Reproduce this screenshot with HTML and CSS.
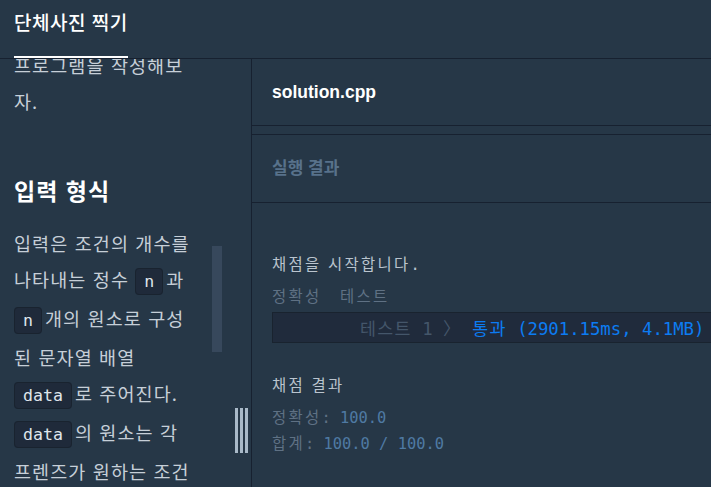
FILE: index.html
```html
<!DOCTYPE html>
<html lang="ko">
<head>
<meta charset="utf-8">
<title>단체사진 찍기</title>
<link rel="stylesheet" href="styles.css">
</head>
<body>
<div class="app">
  <header class="topbar">
    <div class="tab">단체사진 찍기</div>
  </header>
  <main class="panes">
    <section class="desc">
      <div class="desc-body">
        <p>프로그램을 작성해보<br>자.</p>
        <h3>입력 형식</h3>
        <p>입력은 조건의 개수를<br>나타내는 정수 <code>n</code>과<br><code>n</code>개의 원소로 구성<br>된 문자열 배열<br><code>data</code>로 주어진다.<br><code>data</code>의 원소는 각<br>프렌즈가 원하는 조건<br>이 <code>N~F=0</code>과 같은</p>
      </div>
      <div class="scroll-thumb"></div>
      <div class="grip"><span></span><span></span><span></span></div>
    </section>
    <section class="work">
      <div class="file-head">solution.cpp</div>
      <div class="result-head">실행 결과</div>
      <div class="console">
        <div class="line msg"><span class="ko">채점을 시작합니다</span>.</div>
        <div class="line dim gap-s"><span class="ko">정확성</span>  <span class="ko">테스트</span></div>
        <div class="case"><span class="case-name"><span class="ko">테스트</span> 1 <span class="ko">〉</span></span> <span class="pass"><span class="ko">통과</span> (2901.15ms, 4.1MB)</span></div>
        <div class="line msg gap-l"><span class="ko">채점 결과</span></div>
        <div class="line gap-s"><span class="ko dim">정확성</span><span class="dim">: </span><span class="num">100.0</span></div>
        <div class="line"><span class="ko dim">합계</span><span class="dim">: </span><span class="num">100.0 / 100.0</span></div>
      </div>
    </section>
  </main>
</div>
</body>
</html>
```
FILE: styles.css
```css
html, body {
  margin: 0;
  padding: 0;
}
body {
  width: 711px;
  height: 487px;
  overflow: hidden;
  background: #263747;
  font-family: "Noto Sans CJK KR", "Noto Sans", sans-serif;
  color: #c6cfd8;
}
.app {
  display: flex;
  flex-direction: column;
  height: 487px;
}
.topbar {
  height: 58px;
  border-bottom: 1px solid #172130;
  display: flex;
  flex-shrink: 0;
}
.tab {
  margin-left: 14px;
  font-size: 19px;
  letter-spacing: 0.5px;
  font-weight: 500;
  color: #ffffff;
  line-height: 44px;
  height: 44px;
  padding-bottom: 12px;
  border-bottom: 2px solid #ffffff;
  white-space: nowrap;
}
.panes {
  flex: 1;
  display: flex;
  min-height: 0;
}
.desc {
  width: 251px;
  flex-shrink: 0;
  border-right: 1px solid #172130;
  position: relative;
  overflow: hidden;
}
.desc-body {
  margin-top: -12px;
  padding-left: 14px;
  font-size: 18.5px;
  letter-spacing: 1.1px;
  line-height: 36px;
  white-space: nowrap;
}
.desc-body p {
  margin: 0;
}
.desc-body h3 {
  margin: 55px 0 19px;
  font-size: 23px;
  letter-spacing: 1px;
  line-height: 32px;
  font-weight: 700;
  color: #ffffff;
}
.desc-body code {
  font-family: "DejaVu Sans Mono", monospace;
  font-size: 16.6px;
  letter-spacing: 0;
  color: #dfe6ec;
  background: #1f2a3a;
  border: 1px solid #19232f;
  border-radius: 4px;
  padding: 3px 8px;
  margin-right: 3px;
}
.scroll-thumb {
  position: absolute;
  left: 212px;
  top: 187px;
  width: 10px;
  height: 106px;
  background: #37485c;
}
.grip {
  position: absolute;
  left: 235px;
  top: 349px;
  height: 45px;
  display: flex;
  gap: 2px;
}
.grip span {
  width: 3px;
  background: #a9b9c8;
}
.work {
  flex: 1;
  min-width: 0;
  overflow: hidden;
  display: flex;
  flex-direction: column;
}
.file-head {
  flex-shrink: 0;
  height: 66px;
  border-bottom: 1px solid #172130;
  padding-left: 20px;
  display: flex;
  align-items: center;
  font-family: "Liberation Sans", Arial, sans-serif;
  font-weight: 700;
  font-size: 17.5px;
  color: #ffffff;
}
.result-head {
  flex-shrink: 0;
  margin-top: 8px;
  height: 62px;
  border-top: 1px solid #172130;
  border-bottom: 1px solid #172130;
  padding: 0 0 5px 20px;
  display: flex;
  align-items: center;
  font-weight: 700;
  font-size: 17px;
  color: #58728b;
}
.console {
  flex-shrink: 0;
  padding: 47px 0 0 20px;
  font-family: "DejaVu Sans Mono", "Noto Sans CJK KR", monospace;
  font-size: 15.4px;
}
.ko {
  font-family: "Noto Sans CJK KR", sans-serif;
  letter-spacing: 0.15em;
}
.line {
  line-height: 26px;
  height: 26px;
  white-space: pre;
}
.msg {
  color: #bac4ce;
}
.dim {
  color: #5f7184;
}
.num {
  color: #4f7aa3;
}
.gap-s {
  margin-top: 6px;
}
.gap-l {
  margin-top: 28px;
}
.case {
  margin-top: 4px;
  height: 29px;
  line-height: 29px;
  width: 600px;
  border: 1px solid #19232f;
  background: #202b3c;
  padding-left: 87px;
  font-size: 17.3px;
  white-space: pre;
}
.case .ko {
  letter-spacing: 0.08em;
}
.case-name {
  color: #44566a;
}
.pass {
  color: #0c7cf2;
}
```
